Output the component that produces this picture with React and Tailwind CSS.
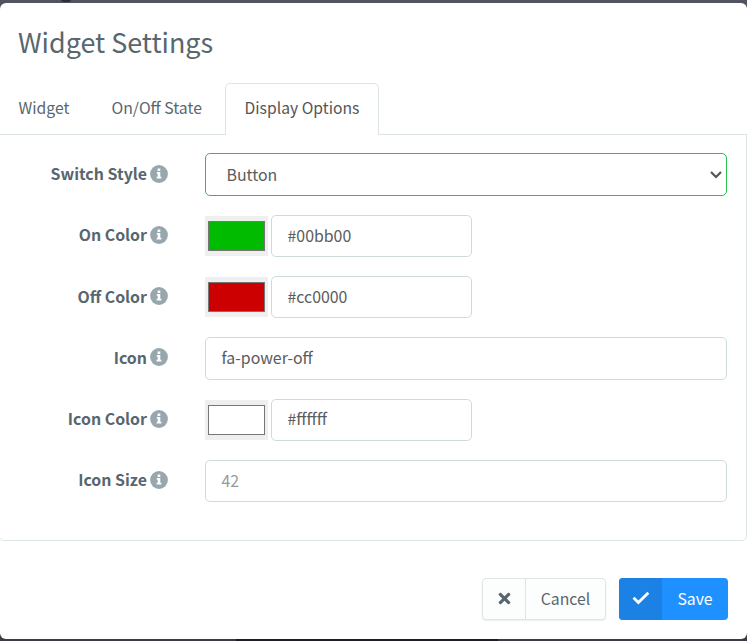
import { FaTimes } from "react-icons/fa";

const field =
  "flex h-[42.25px] items-center rounded-[5px] border border-[#cfdbdb] bg-white px-[15.5px] pb-[0.7px] text-[15.9px] leading-none text-[#5c5c5c]";

function InfoIcon() {
  return (
    <svg className="-mt-px h-[18px] w-[18px] shrink-0" viewBox="0 0 18 18">
      <circle cx="9" cy="9" r="8.9" fill="#98a6ad" />
      <path
        fill="#fff"
        d="M7.6 3.6h2.7v2.3H7.6zM6.8 7.1h3.5v4.7h1.1v1.7H6.6v-1.7h1.1V8.7h-.9z"
      />
    </svg>
  );
}

function Row({ label, children }) {
  return (
    <div className="flex h-[42.25px]">
      <div className="flex h-[41px] w-[168px] shrink-0 items-center justify-end gap-[3px] font-bold text-[#58666e]">
        <span className="text-[15.9px] leading-none">{label}</span>
        <InfoIcon />
      </div>
      <div className="ml-[37px] flex w-[522px] items-start">{children}</div>
    </div>
  );
}

function ColorField({ swatch, value }) {
  return (
    <>
      <div className="mt-[1px] mr-[3px] flex h-[40px] w-[63px] items-center bg-[#efefef] px-[3px] py-[5px]">
        <div className={`h-[30px] w-[57px] border border-[#767676] ${swatch}`} />
      </div>
      <div className={`${field} w-[201px]`}>{value}</div>
    </>
  );
}

export default function App() {
  return (
    <div className="relative h-[641px] w-[747px] overflow-hidden bg-[#3a3d47] pt-[3px] font-['Noto_Sans_CJK_SC','Source_Sans_Pro',sans-serif]">
      <div className="absolute inset-x-0 top-0 h-5 overflow-hidden bg-[#515361]">
        <div className="absolute top-[-7px] left-[60px] h-[9px] w-[12px] rounded-full border-2 border-[#2b2e38]" />
      </div>
      <div className="absolute right-[249px] bottom-0 h-[2px] w-[262px] bg-[#1b1d26]" />
      <div className="relative flex h-[636px] flex-col rounded-[6px] bg-white">
        <h1 className="flex h-[80px] items-center pb-[2px] pl-[18px] text-[26.9px] leading-none text-[#58666e]">
          Widget Settings
        </h1>

        <div className="flex h-[52px] text-[15.7px] leading-none text-[#58666e]">
          <div className="flex w-[93px] items-center border-b border-[#dee5e7] pb-[2px] pl-[18.5px]">Widget</div>
          <div className="flex w-[132px] items-center border-b border-[#dee5e7] pb-[2px] pl-[18.5px] text-[15.8px]">On/Off State</div>
          <div className="flex w-[154px] items-center rounded-t-[5px] border border-b-0 border-[#dee5e7] pb-[4px] pl-[18.5px] text-[#555555]">
            Display Options
          </div>
          <div className="flex-1 border-b border-[#dee5e7]" />
        </div>

        <div className="-ml-px flex h-[406px] flex-col gap-[19px] rounded-b-[5px] border border-t-0 border-[#dee5e7] pt-[18.5px]">
          <Row label="Switch Style">
            <div className="-mt-[0.5px] flex h-[43px] w-full items-center justify-between rounded-[5px] border border-[#27c24c] bg-white pr-[4px] pl-[20.5px] text-[15.9px] leading-none text-[#5c5c5c]">
              <span className="pt-px">Button</span>
              <svg className="-mr-px" width="14" height="10" viewBox="0 0 14 10" fill="none" stroke="#555" strokeWidth="2.2">
                <path d="M2 2 L7 7 L12 2" />
              </svg>
            </div>
          </Row>
          <Row label="On Color">
            <ColorField swatch="bg-[#00bb00]" value="#00bb00" />
          </Row>
          <Row label="Off Color">
            <ColorField swatch="bg-[#cc0000]" value="#cc0000" />
          </Row>
          <Row label="Icon">
            <div className={`${field} w-full`}>fa-power-off</div>
          </Row>
          <Row label="Icon Color">
            <ColorField swatch="bg-white" value="#ffffff" />
          </Row>
          <Row label="Icon Size">
            <div className={`${field} w-full`}>
              <span className="text-[#999999]">42</span>
            </div>
          </Row>
        </div>

        <div className="mt-[37px] flex justify-end gap-[13px] pr-[19px] text-[15.8px] leading-none">
          <button className="flex h-[42px] w-[124px] items-stretch rounded-[4px] border border-[#dee5e7] bg-[#fcfdfd] text-[#58666e] shadow-[0_1px_1px_rgba(90,90,90,0.1)]">
            <span className="flex w-[43px] items-center justify-center border-r border-[#dee5e7] pb-[2px]">
              <FaTimes className="h-[17px] w-[17px]" />
            </span>
            <span className="flex flex-1 items-center justify-center">Cancel</span>
          </button>
          <button className="flex h-[42px] w-[109px] items-stretch overflow-hidden rounded-[4px] bg-[#1e90ff] text-white">
            <span className="flex w-[43px] items-center justify-center bg-[#1b81e5] pb-[2px]">
              <svg className="h-[14px] w-[18px]" viewBox="0 0 18 14" fill="none" stroke="currentColor" strokeWidth="2.8">
                <path d="M1.5 6.8 L6.4 11.6 L16.3 1.7" />
              </svg>
            </span>
            <span className="flex flex-1 items-center justify-center">Save</span>
          </button>
        </div>
      </div>
    </div>
  );
}
